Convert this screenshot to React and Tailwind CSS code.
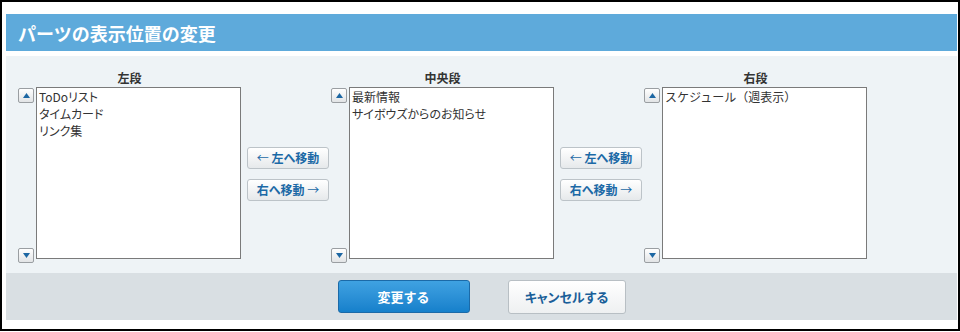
const font = { fontFamily: '"Noto Sans CJK JP", "Noto Sans", sans-serif' };

function ArrowBtn({ down }) {
  return (
    <button className="w-[16px] h-[15px] flex items-center justify-center border border-[#9a9ea2] rounded-[2px] bg-gradient-to-b from-white to-[#e2e4e6]">
      <svg width="7" height="5" viewBox="0 0 7 5">
        {down ? <polygon points="0,0 7,0 3.5,5" fill="#1d67a3" /> : <polygon points="3.5,0 7,5 0,5" fill="#1d67a3" />}
      </svg>
    </button>
  );
}

function Column({ label, items }) {
  return (
    <div className="w-[223px] flex flex-col">
      <div className="h-[18px] leading-[18px] text-center text-[12px] font-bold text-[#333]">{label}</div>
      <div className="flex items-start gap-[2px]">
        <div className="mt-px h-[175px] flex flex-col justify-between">
          <ArrowBtn />
          <ArrowBtn down />
        </div>
        <div className="w-[205px] h-[172px] bg-white border border-[#7a7a7a] px-[2px]">
          {items.map((t) => (
            <div key={t.text} className={`text-[12px] leading-[17px] text-[#333] ${t.palt ? "[font-feature-settings:'palt']" : ''}`}>{t.text}</div>
          ))}
        </div>
      </div>
    </div>
  );
}

function MoveButtons() {
  return (
    <div className="w-[82px] mt-[78px] ml-[6px] mr-[2px] flex flex-col gap-[10px]">
      <button className="h-[22px] rounded-[3px] border border-[#bcc3c8] bg-gradient-to-b from-white to-[#e6e9eb] text-[12px] font-bold text-[#1b69a6] [font-feature-settings:'palt']">
        <span className="font-normal">←</span> 左へ移動
      </button>
      <button className="h-[22px] rounded-[3px] border border-[#bcc3c8] bg-gradient-to-b from-white to-[#e6e9eb] text-[12px] font-bold text-[#1b69a6] [font-feature-settings:'palt']">
        右へ移動 <span className="font-normal">→</span>
      </button>
    </div>
  );
}

export default function App() {
  return (
    <div className="w-[960px] h-[332px] bg-white" style={font}>
      <div className="h-[331px] border-2 border-black pt-[12px] pl-[4px] pr-px flex flex-col">
        <div className="h-[37px] bg-[#5eaadb] px-[12px] flex items-center">
          <h1 className="text-[18px] font-bold text-white leading-none">パーツの表示位置の変更</h1>
        </div>
        <div className="mt-[5px] h-[217px] bg-[#eef3f6] pt-[13px] pl-[12px] flex items-start">
          <Column
            label="左段"
            items={[
              { text: 'ToDoリスト', palt: true },
              { text: 'タイムカード', palt: true },
              { text: 'リンク集', palt: true },
            ]}
          />
          <MoveButtons />
          <Column
            label="中央段"
            items={[
              { text: '最新情報', palt: true },
              { text: 'サイボウズからのお知らせ', palt: true },
            ]}
          />
          <MoveButtons />
          <Column label="右段" items={[{ text: 'スケジュール（週表示）', palt: false }]} />
        </div>
        <div className="h-[47px] bg-[#d9dfe3] pt-[7px] flex justify-center items-start gap-[38px]">
          <button className="w-[132px] h-[33px] rounded-[3px] border border-[#1b6aa8] bg-gradient-to-b from-[#3fa2e2] to-[#1580cb] text-white text-[13px] font-bold">
            変更する
          </button>
          <button className="w-[118px] h-[34px] rounded-[3px] border border-[#b8bfc4] bg-gradient-to-b from-white to-[#eef0f1] text-[#1a5f99] text-[13px] font-bold [font-feature-settings:'palt']">
            キャンセルする
          </button>
        </div>
      </div>
    </div>
  );
}
